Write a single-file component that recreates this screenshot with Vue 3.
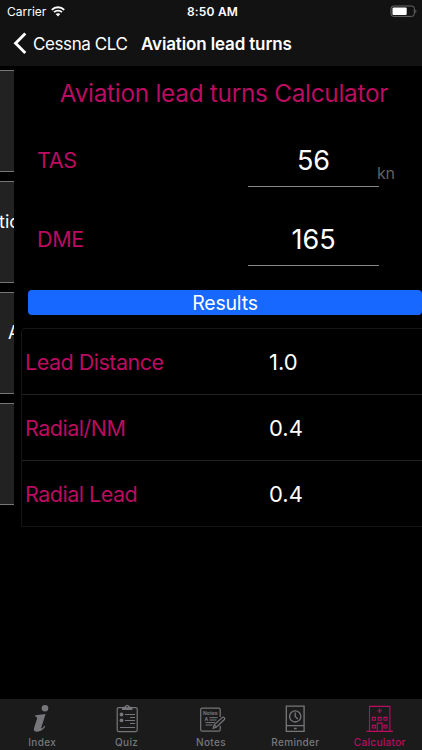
<script setup>
import { ref } from 'vue'

const cards = ['', 'tic', 'A', '']
const inputs = ref([
  { label: 'TAS', value: '56', unit: 'kn' },
  { label: 'DME', value: '165', unit: '' },
])
const results = [
  { label: 'Lead Distance', value: '1.0' },
  { label: 'Radial/NM', value: '0.4' },
  { label: 'Radial Lead', value: '0.4' },
]
</script>

<template>
  <div class="screen">
    <header>
      <div class="status">
        <div class="carrier">
          <span>Carrier</span>
          <svg width="14" height="11" viewBox="0 0 14 11" fill="none" stroke="#fff">
            <path d="M.8 3.8C4.2.4 9.8.4 13.2 3.8" stroke-width="1.9" />
            <path d="M3 6.2c2.2-2.1 5.8-2.1 8 0" stroke-width="1.8" />
            <path d="M4.7 8.1c1.3-1.2 3.3-1.2 4.6 0L7 10.5z" fill="#fff" stroke="none" />
          </svg>
        </div>
        <span class="time">8:50 AM</span>
        <svg class="battery" width="28" height="13" viewBox="0 0 28 13">
          <rect x="1" y="1" width="23.3" height="10.4" rx="2.6" fill="none" stroke="#66676a" />
          <rect x="2.5" y="2.5" width="14.2" height="7.4" rx="1" fill="#fff" />
          <path d="M25.4 4.2q2 2 0 4z" fill="#66676a" />
        </svg>
      </div>
      <nav class="navbar">
        <svg width="14" height="23" viewBox="0 0 14 23" fill="none" stroke="#fff" stroke-width="2.9">
          <path d="M12.3 1.5 2.6 11.3l9.7 9.8" />
        </svg>
        <span class="back">Cessna CLC</span>
        <h1>Aviation lead turns</h1>
      </nav>
    </header>

    <main>
      <aside>
        <div v-for="(c, i) in cards" :key="i" class="card">
          <span :class="{ indent: c === 'A' }">{{ c }}</span>
        </div>
      </aside>
      <section class="panel">
        <h2><span>Aviation lead turns Calculator</span></h2>
        <div v-for="f in inputs" :key="f.label" class="field">
          <span class="name">{{ f.label }}</span>
          <span class="entry">{{ f.value }}</span>
          <span class="unit">{{ f.unit }}</span>
        </div>
        <div class="banner"><span>Results</span></div>
        <div class="results">
          <div v-for="r in results" :key="r.label" class="result">
            <span class="key">{{ r.label }}</span>
            <span class="value">{{ r.value }}</span>
          </div>
        </div>
      </section>
    </main>

    <footer>
      <div class="tab">
        <svg width="30" height="30" viewBox="0 0 30 30" fill="#77777b">
          <circle cx="18" cy="4.3" r="3.3" />
          <path d="M8.4 11.2 18.6 10l-4.3 13.4c-.5 1.7.8 1.5 3.1-1.6l1 .8c-3 4-5.3 5.1-8.4 5.1-2.8 0-3.6-1.6-2.9-4l2.7-8.3c.6-1.9.2-2.7-1.8-2.8z" />
        </svg>
        <span>Index</span>
      </div>
      <div class="tab">
        <svg width="30" height="30" viewBox="0 0 30 30" fill="none" stroke="#77777b" stroke-width="1.2">
          <rect x="5.2" y="3.6" width="20" height="24" rx="1.5" />
          <path d="M10 5.9V3.2l2.7-.8q2.5-3.3 5 0l2.7.8v2.7z" fill="#77777b" stroke="none" />
          <circle cx="15.2" cy="2.7" r=".7" fill="#1b1b1b" stroke="none" />
          <g fill="#77777b" stroke="none"><circle cx="9.5" cy="10.5" r="1.9" /><circle cx="9.5" cy="16.3" r="1.9" /></g>
          <path d="M13 10.5h10M18 13.5h5M13 16.5h10M18 19.5h5M8 23.5h15" stroke-width="1" />
        </svg>
        <span>Quiz</span>
      </div>
      <div class="tab">
        <svg width="30" height="30" viewBox="0 0 30 30" fill="none" stroke="#77777b" stroke-width="1.2">
          <path d="M24.2 13V5.7q0-1.5-1.5-1.5H6.2q-1.5 0-1.5 1.5v20q0 1.5 1.5 1.5h16.5q1.5 0 1.5-1.5v-4" />
          <text x="7" y="10.7" class="icon-word">Notes</text>
          <text x="8.4" y="17" class="icon-word">A</text>
          <path d="M13.5 13.7h8M13.5 16h7M9.5 18.6h9.5M9.5 21h7" stroke-width="1" />
          <path d="m17.2 24.2 1-3.4 8-7.2q1-.9 2 .1t0 2l-8 7.5z" fill="#1b1b1b" />
          <path d="m18.2 20.8 2 2" />
        </svg>
        <span>Notes</span>
      </div>
      <div class="tab">
        <svg width="30" height="30" viewBox="0 0 30 30" fill="none" stroke="#77777b" stroke-width="1.3">
          <path d="M6.3 2.2h17.8v25.2H6.3zM6.3 21.6h17.8M14 24.5h2.7" />
          <circle cx="15.2" cy="12.4" r="5.6" />
          <path d="M15.2 8.5v4l2.6 2.4" />
        </svg>
        <span>Reminder</span>
      </div>
      <div class="tab active">
        <svg width="30" height="30" viewBox="0 0 30 30" fill="none" stroke="#ba0c61" stroke-width="1.1">
          <path d="M1.5 27.4h26.5M4.5 27V2.4h20.4V27M14.6 4.6v4.4M12.4 6.8h4.4" />
          <path d="M7.3 13.4h3.1v2.8H7.3zM13.1 13.4h3.1v2.8h-3.1zM18.9 13.4H22v2.8h-3.1zM7.3 21.4h3.1v2.6H7.3zM18.9 21.4H22V24h-3.1zM12.3 27v-7.9h4.8V27" />
        </svg>
        <span>Calculator</span>
      </div>
    </footer>
  </div>
</template>

<style>
body {
  margin: 0;
  background: #000;
}
</style>

<style scoped>
.screen {
  width: 422px;
  height: 750px;
  display: flex;
  flex-direction: column;
  overflow: hidden;
  background: #000;
  color: #fff;
  font-family: Inter, "Liberation Sans", sans-serif;
  white-space: nowrap;
}
header {
  height: 66px;
  background: #121212;
}
.status {
  height: 22px;
  display: grid;
  grid-template-columns: 1fr auto 1fr;
  align-items: center;
  padding: 0 4px 0 7px;
  box-sizing: border-box;
  font-size: 12px;
}
.carrier {
  display: flex;
  align-items: center;
  gap: 5px;
}
.time {
  font-weight: 600;
  letter-spacing: 0.2px;
}
.battery {
  justify-self: end;
}
.navbar {
  height: 43px;
  display: flex;
  align-items: center;
  padding-left: 13px;
}
.back {
  width: 108px;
  margin-left: 6px;
  font-size: 17px;
  letter-spacing: -0.4px;
}
h1 {
  margin: 0;
  font-size: 17px;
  font-weight: 600;
  letter-spacing: -0.14px;
}
main {
  height: 633px;
  display: grid;
  grid-template-columns: 14px 1fr;
}
aside {
  display: flex;
  flex-direction: column;
  gap: 9px;
  padding-top: 4px;
  overflow: hidden;
}
.card {
  height: 102px;
  box-sizing: border-box;
  display: flex;
  align-items: center;
  padding-bottom: 22px;
  border: solid #777;
  border-width: 1px 0;
  background: #222;
  font-size: 18px;
}
.card span {
  margin-left: -1px;
}
.card .indent {
  margin-left: 8px;
}
.panel {
  padding-top: 8px;
  min-width: 0;
}
h2 {
  height: 37px;
  margin: 0 0 7px 12px;
  display: flex;
  align-items: center;
  justify-content: center;
  color: #ba0c61;
  font-size: 24.3px;
  font-weight: 400;
  letter-spacing: -0.25px;
}
.field {
  height: 79px;
  display: grid;
  grid-template-columns: 211px 131px 1fr;
  padding-left: 23px;
  align-items: center;
}
.name {
  padding-top: 5px;
  color: #ba0c61;
  font-size: 21.5px;
  letter-spacing: -0.35px;
}
.entry {
  height: 51px;
  margin-top: 7px;
  border-bottom: 1px solid #888;
  line-height: 51px;
  text-align: center;
  font-size: 27px;
}
.unit {
  margin: 31px 0 0 -2px;
  color: #606060;
  font-size: 16px;
  letter-spacing: -0.4px;
}
.banner {
  height: 25px;
  margin: 14px 0 0 14px;
  display: flex;
  align-items: center;
  justify-content: center;
  border-radius: 4px;
  background: #1668ff;
  font-size: 19.5px;
  letter-spacing: -0.2px;
}
.results {
  margin: 13px 0 0 7px;
  border: solid #151515;
  border-width: 1px 0 1px 1px;
  border-radius: 5px 0 0 2px;
}
.result {
  height: 65px;
  display: flex;
  align-items: center;
  padding-left: 3px;
  border-bottom: 1px solid #222;
  font-size: 22px;
}
.result:last-child {
  border-bottom: 0;
}
.key {
  width: 244px;
  color: #ba0c61;
  font-size: 21.5px;
  letter-spacing: -0.5px;
}
footer {
  height: 51px;
  display: grid;
  grid-template-columns: repeat(5, 1fr);
  background: #1b1b1b;
}
.tab {
  display: flex;
  flex-direction: column;
  align-items: center;
  padding-top: 5px;
  color: #77777b;
  font-size: 10px;
  font-weight: 500;
  letter-spacing: 0.32px;
}
.tab span {
  line-height: 14px;
  margin-top: 1px;
}
.tab.active {
  color: #ba0c61;
}
.icon-word {
  font: 700 5px Inter, sans-serif;
  letter-spacing: 0;
  fill: #77777b;
  stroke: none;
}
</style>
